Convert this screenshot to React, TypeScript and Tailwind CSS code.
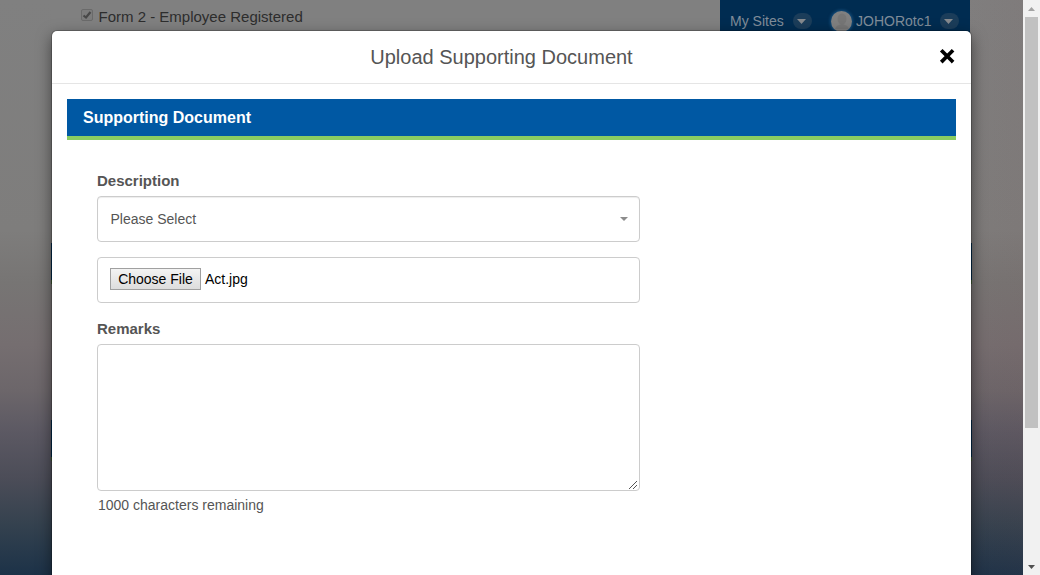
import React from "react";

function RoundCaret() {
  return (
    <span className="flex h-4 w-[19px] shrink-0 items-center justify-center rounded-full bg-[#1b3d5a] pr-[2px]">
      <svg width="9" height="5" viewBox="0 0 9 5">
        <path d="M0 0h9L4.500 5z" fill="#868a8e" />
      </svg>
    </span>
  );
}

function SiteBar() {
  return (
    <div className="flex h-[42px] w-[250px] bg-[#002c51] pl-[10px] text-[14px] leading-5 text-[#808d99]">
      <div className="flex h-[42px] w-full items-center">
        <span className="w-[63px] shrink-0 whitespace-nowrap">My Sites</span>
        <RoundCaret />
        <span className="ml-[19px] flex h-[21px] w-[21px] shrink-0 items-center justify-center rounded-full bg-[#808080] shadow-[0_0_3px_1px_#16507f]">
          <svg width="14" height="16" viewBox="0 0 14 16" fill="#767676">
            <ellipse cx="7" cy="6" rx="4.5" ry="5.5" />
            <path d="M0 16q1-4 7-5q6 1 7 5z" />
          </svg>
        </span>
        <span className="ml-1 w-[84px] shrink-0 whitespace-nowrap">JOHORotc1</span>
        <RoundCaret />
      </div>
    </div>
  );
}

function PageBehind() {
  return (
    <div className="h-full w-full bg-[linear-gradient(90deg,transparent_90%,rgba(118,70,70,0.08)_100%),linear-gradient(180deg,#808080_0%,#7e7d7c_40%,#777574_49%,#756e70_60%,#6c666a_68%,#5c5963_75%,#4c4d58_83%,#35424f_91%,#1c3248_100%)]">
      <div className="ml-[52px] flex h-[31px] w-[918px] items-start justify-between bg-[#808080]">
        <div className="flex items-center pl-[29px] pt-[7px]">
          <span className="mb-[4px] flex h-3 w-3 items-center justify-center rounded-[2px] border border-[#6a6a6a] bg-[#7c7c7c]">
            <svg width="10" height="10" viewBox="0 0 10 10">
              <path d="M1.500 5.500L4 7.500L8.500 2" fill="none" stroke="#484848" strokeWidth="2.2" />
            </svg>
          </span>
          <span className="ml-[5.500px] text-[15px] leading-5 text-[#2d2d2d]">Form 2 - Employee Registered</span>
        </div>
        <SiteBar />
      </div>
      <div className="ml-[51px] mt-[212px] h-[41px] w-[921px] border-b-4 border-[#425f36] bg-[#002c51]" />
      <div className="ml-[51px] mt-[136px] h-[41px] w-[921px] border-b-4 border-[#425f36] bg-[#002c51]" />
    </div>
  );
}

function UploadDialog() {
  return (
    <section className="absolute left-[52px] top-[31px] h-[600px] w-[919px] rounded-[5px] bg-white text-[#555] shadow-[0_5px_15px_rgba(0,0,0,0.5),0_0_0_1px_rgba(0,0,0,0.2)]">
      <header className="grid h-[53px] grid-cols-[1fr_auto_1fr] items-center border-b border-[#e5e5e5] pl-[15px] pr-[16px]">
        <span />
        <h1 className="whitespace-nowrap pr-[19px] text-[20px] leading-6">Upload Supporting Document</h1>
        <button aria-label="Close" className="mb-[3px] justify-self-end">
          <svg width="16" height="16" viewBox="0 0 16 16">
            <path
              d="M3 3L13.500 13.500M13.500 3L3 13.500"
              stroke="#000"
              strokeWidth="4.2"
              strokeLinecap="square"
              transform="translate(.9 .9) scale(.88)"
            />
          </svg>
        </button>
      </header>
      <div className="px-[15px] pt-[15px]">
        <h2 className="h-[41px] border-b-4 border-[#89cc62] bg-[#0058a3] pl-4 pt-px text-[16px] font-bold leading-9 text-white">
          Supporting Document
        </h2>
        <form className="w-[573px] pl-[30px] pt-[31px] text-[14px]">
          <label className="block h-[25px] text-[15px] font-bold leading-5">Description</label>
          <div className="flex h-[46px] items-center justify-between rounded-[4px] border border-[#ccc] pl-[12.500px] pr-[11px] shadow-[inset_0_1px_1px_rgba(0,0,0,0.075)]">
            <span className="leading-5">Please Select</span>
            <svg width="8" height="4" viewBox="0 0 8 4">
              <path d="M0 0h8L4 4z" fill="#8c8c8c" />
            </svg>
          </div>
          <div className="mt-[15px] flex h-[46px] items-start rounded-[4px] border border-[#ccc] pl-3 pt-[10px] text-black">
            <button
              type="button"
              className="h-[22px] w-[91px] whitespace-nowrap border border-[#a0a0a0] bg-linear-to-b from-[#f3f3f3] to-[#dddddd] leading-5"
            >
              Choose File
            </button>
            <span className="ml-1 leading-[22px]">Act.jpg</span>
          </div>
          <label className="mt-4 block h-[25px] text-[15px] font-bold leading-5">Remarks</label>
          <div className="flex h-[147px] items-end justify-end rounded-[4px] border border-[#ccc] p-[2px] pb-px">
            <svg width="8" height="8" viewBox="0 0 8 8" shapeRendering="crispEdges">
              <path d="M0 8L8 0M4 8L8 4" stroke="#555" strokeWidth="1" />
            </svg>
          </div>
          <p className="mt-[4px] pl-px leading-5">1000 characters remaining</p>
        </form>
      </div>
    </section>
  );
}

function Scrollbar() {
  return (
    <div className="flex h-full w-[17px] shrink-0 flex-col items-center bg-[#f1f1f1]">
      <div className="flex h-[17px] items-center">
        <svg width="7" height="4" viewBox="0 0 7 4">
          <path d="M0 4h7L3.500 0z" fill="#a3a3a3" />
        </svg>
      </div>
      <div className="h-[411px] w-[13px] bg-[#c1c1c1]" />
      <div className="mt-auto flex h-[17px] items-center">
        <svg width="7" height="4" viewBox="0 0 7 4">
          <path d="M0 0h7L3.500 4z" fill="#505050" />
        </svg>
      </div>
    </div>
  );
}

export default function App() {
  return (
    <div className="flex h-[575px] w-[1040px] overflow-hidden font-['Liberation_Sans',Arial,sans-serif]">
      <main className="relative h-full w-[1023px] overflow-hidden">
        <PageBehind />
        <UploadDialog />
      </main>
      <Scrollbar />
    </div>
  );
}
